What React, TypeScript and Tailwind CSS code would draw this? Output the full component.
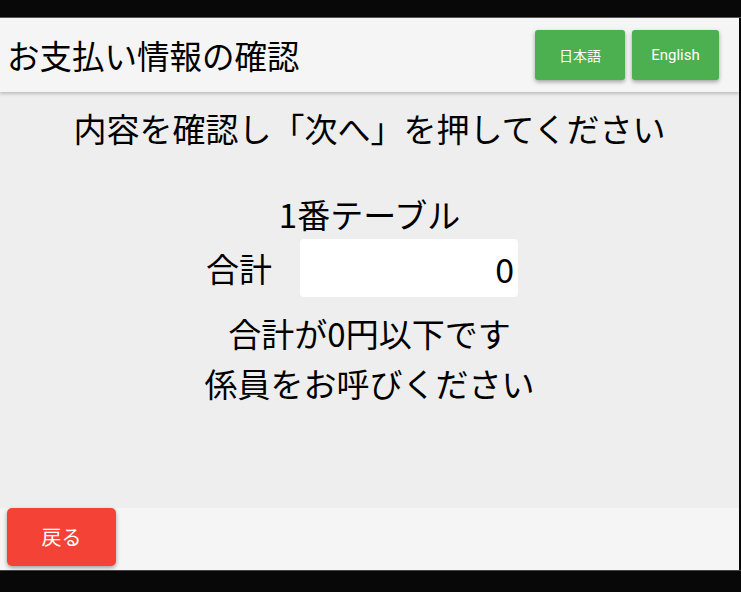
import React from "react";

export default function App() {
  const jp = { fontFamily: '"Noto Sans CJK JP", "Noto Sans", sans-serif' };
  return (
    <div className="w-[741px] h-[592px] bg-[#080808] flex flex-col overflow-hidden" style={jp}>
      <div className="h-[18px] shrink-0 border-b border-[#555]" />
      <div className="w-[739px] flex-1 flex flex-col bg-[#eeeeee] relative">
        <header className="h-[74px] shrink-0 bg-[#f5f5f5] flex items-center justify-between pl-[7px] pr-[20px] shadow-[0_2px_3px_rgba(0,0,0,0.2)] relative z-10">
          <h1 className="text-[32.5px] leading-none text-[#000]">お支払い情報の確認</h1>
          <div className="flex gap-[7px]">
            <button className="w-[90px] h-[50px] bg-[#4caf50] text-white text-[14px] rounded-[3px] shadow-[0_2px_4px_rgba(0,0,0,0.35)]">
              日本語
            </button>
            <button
              className="w-[87px] h-[50px] bg-[#4caf50] text-white text-[15px] rounded-[3px] shadow-[0_2px_4px_rgba(0,0,0,0.35)]"
              style={{ fontFamily: "Roboto, sans-serif" }}
            >
              English
            </button>
          </div>
        </header>
        <main className="flex-1 flex flex-col items-center pt-[11px] text-[#000]">
          <p className="h-[50px] leading-[50px] text-[33px]">内容を確認し「次へ」を押してください</p>
          <p className="mt-[36px] h-[50px] leading-[50px] text-[33px]">1番テーブル</p>
          <div className="flex items-center gap-[28px] pr-[15px]">
            <span className="text-[33px] leading-none">合計</span>
            <div className="w-[218px] h-[58px] bg-white rounded-[4px] flex items-center justify-end pr-[4px] text-[34px]">
              0
            </div>
          </div>
          <p className="mt-[11px] h-[50px] leading-[50px] text-[33px]">合計が0円以下です</p>
          <p className="h-[50px] leading-[50px] text-[33px]">係員をお呼びください</p>
        </main>
        <footer className="h-[62px] shrink-0 bg-[#f5f5f5] flex items-start pl-[7px]">
          <button className="w-[109px] h-[58px] bg-[#f44336] text-white text-[20px] rounded-[5px] shadow-[0_2px_4px_rgba(0,0,0,0.35)]">
            戻る
          </button>
        </footer>
      </div>
      <div className="h-[22px] shrink-0 border-t border-[#444]" />
    </div>
  );
}
